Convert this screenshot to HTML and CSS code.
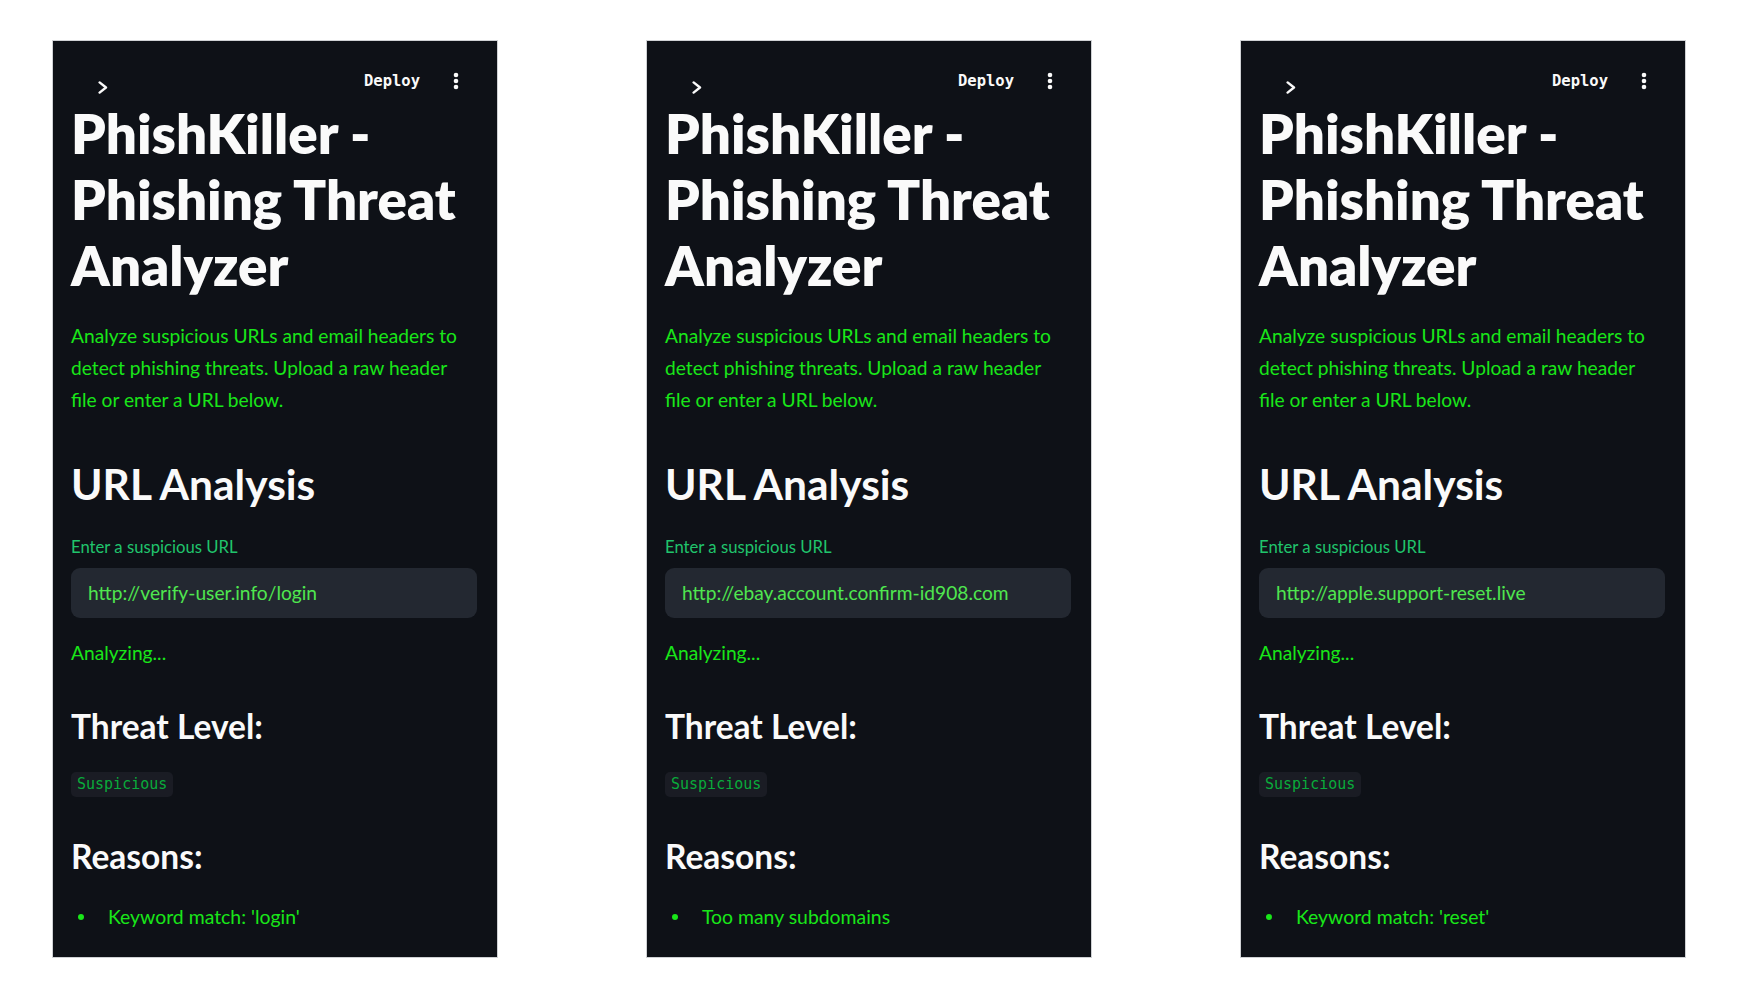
FILE: index.html
```html
<!DOCTYPE html>
<html lang="en">
<head>
<meta charset="utf-8">
<title>PhishKiller - Phishing Threat Analyzer</title>
<link rel="stylesheet" href="styles.css">
</head>
<body>
<main class="board">

  <section class="phone">
    <header class="topbar">
      <svg class="chevron" width="10" height="13" viewBox="0 0 10 13"><polyline points="1.6,1.4 8,6.5 1.6,11.6" fill="none" stroke="#fafafa" stroke-width="2.4" stroke-linecap="round" stroke-linejoin="round"/></svg>
      <span class="deploy">Deploy</span>
      <svg class="kebab" width="6" height="18" viewBox="0 0 6 18"><circle cx="3" cy="3" r="2.3" fill="#fafafa"/><circle cx="3" cy="9" r="2.3" fill="#fafafa"/><circle cx="3" cy="15" r="2.3" fill="#fafafa"/></svg>
    </header>
    <div class="content">
      <h1 class="title">PhishKiller - Phishing Threat Analyzer</h1>
      <p class="intro">Analyze suspicious URLs and email headers to detect phishing threats. Upload a raw header file or enter a URL below.</p>
      <h2 class="section-title">URL Analysis</h2>
      <label class="field-label">Enter a suspicious URL</label>
      <input class="url-input" type="text" value="http://verify-user.info/login" readonly>
      <p class="status">Analyzing...</p>
      <h3 class="sub-title">Threat Level:</h3>
      <code class="badge">Suspicious</code>
      <h3 class="sub-title reasons">Reasons:</h3>
      <ul class="reasons-list"><li>Keyword match: 'login'</li></ul>
    </div>
  </section>

  <section class="phone">
    <header class="topbar">
      <svg class="chevron" width="10" height="13" viewBox="0 0 10 13"><polyline points="1.6,1.4 8,6.5 1.6,11.6" fill="none" stroke="#fafafa" stroke-width="2.4" stroke-linecap="round" stroke-linejoin="round"/></svg>
      <span class="deploy">Deploy</span>
      <svg class="kebab" width="6" height="18" viewBox="0 0 6 18"><circle cx="3" cy="3" r="2.3" fill="#fafafa"/><circle cx="3" cy="9" r="2.3" fill="#fafafa"/><circle cx="3" cy="15" r="2.3" fill="#fafafa"/></svg>
    </header>
    <div class="content">
      <h1 class="title">PhishKiller - Phishing Threat Analyzer</h1>
      <p class="intro">Analyze suspicious URLs and email headers to detect phishing threats. Upload a raw header file or enter a URL below.</p>
      <h2 class="section-title">URL Analysis</h2>
      <label class="field-label">Enter a suspicious URL</label>
      <input class="url-input" type="text" value="http://ebay.account.confirm-id908.com" readonly>
      <p class="status">Analyzing...</p>
      <h3 class="sub-title">Threat Level:</h3>
      <code class="badge">Suspicious</code>
      <h3 class="sub-title reasons">Reasons:</h3>
      <ul class="reasons-list"><li>Too many subdomains</li></ul>
    </div>
  </section>

  <section class="phone">
    <header class="topbar">
      <svg class="chevron" width="10" height="13" viewBox="0 0 10 13"><polyline points="1.6,1.4 8,6.5 1.6,11.6" fill="none" stroke="#fafafa" stroke-width="2.4" stroke-linecap="round" stroke-linejoin="round"/></svg>
      <span class="deploy">Deploy</span>
      <svg class="kebab" width="6" height="18" viewBox="0 0 6 18"><circle cx="3" cy="3" r="2.3" fill="#fafafa"/><circle cx="3" cy="9" r="2.3" fill="#fafafa"/><circle cx="3" cy="15" r="2.3" fill="#fafafa"/></svg>
    </header>
    <div class="content">
      <h1 class="title">PhishKiller - Phishing Threat Analyzer</h1>
      <p class="intro">Analyze suspicious URLs and email headers to detect phishing threats. Upload a raw header file or enter a URL below.</p>
      <h2 class="section-title">URL Analysis</h2>
      <label class="field-label">Enter a suspicious URL</label>
      <input class="url-input" type="text" value="http://apple.support-reset.live" readonly>
      <p class="status">Analyzing...</p>
      <h3 class="sub-title">Threat Level:</h3>
      <code class="badge">Suspicious</code>
      <h3 class="sub-title reasons">Reasons:</h3>
      <ul class="reasons-list"><li>Keyword match: 'reset'</li></ul>
    </div>
  </section>

</main>
</body>
</html>
```

FILE: styles.css
```css
html, body {
  margin: 0;
  padding: 0;
  background: #ffffff;
}

.board {
  display: flex;
  align-items: flex-start;
  gap: 148px;
  padding: 40px 0 0 52px;
}

.phone {
  width: 446px;
  height: 918px;
  box-sizing: border-box;
  border: 1px solid #cfd1d4;
  background: #0e1117;
  overflow: hidden;
  font-family: Lato, "Liberation Sans", sans-serif;
}

.topbar {
  display: flex;
  align-items: flex-start;
  height: 59px;
  box-sizing: border-box;
  padding: 31px 38px 0 45px;
}

.chevron {
  display: block;
  margin-top: 9px;
}

.deploy {
  margin-left: auto;
  font-family: "DejaVu Sans Mono", "Liberation Mono", monospace;
  font-size: 15.5px;
  line-height: 18px;
  font-weight: 600;
  color: #fafafa;
}

.kebab {
  display: block;
  margin-left: 33px;
}

.content {
  padding: 0 20px 0 18px;
}

.title {
  margin: 0;
  font-size: 54.7px;
  line-height: 66px;
  font-weight: 800;
  color: #fafafa;
}

.intro {
  margin: 22px 0 0;
  font-size: 19.2px;
  line-height: 32px;
  color: #19e619;
}

.section-title {
  margin: 41px 0 0;
  font-size: 42.5px;
  line-height: 54px;
  font-weight: 700;
  color: #fafafa;
}

.field-label {
  display: block;
  margin-top: 25px;
  font-size: 16.7px;
  line-height: 22px;
  color: #20c46c;
}

.url-input {
  display: block;
  width: 100%;
  height: 50px;
  box-sizing: border-box;
  margin: 9.5px 0 0;
  padding: 0 17px;
  border: none;
  border-radius: 9px;
  outline: none;
  background: #232831;
  color: #4fe64f;
  font-family: Lato, "Liberation Sans", sans-serif;
  font-size: 19.2px;
}

.status {
  margin: 19.5px 0 0;
  font-size: 19.2px;
  line-height: 32px;
  color: #19e619;
}

.sub-title {
  margin: 36px 0 0;
  font-size: 33.5px;
  line-height: 42px;
  font-weight: 700;
  color: #fafafa;
}

.sub-title.reasons {
  margin-top: 38px;
}

.badge {
  display: block;
  width: max-content;
  margin-top: 25px;
  height: 25px;
  line-height: 25px;
  padding: 0 6px;
  border-radius: 5px;
  background: #1a1c24;
  color: #09ab3b;
  font-family: "DejaVu Sans Mono", "Liberation Mono", monospace;
  font-size: 15px;
}

.reasons-list {
  margin: 24px 0 0;
  padding: 0;
  list-style: none;
}

.reasons-list li {
  display: flex;
  align-items: center;
  font-size: 19.4px;
  line-height: 32px;
  color: #19e619;
}

.reasons-list li::before {
  content: "";
  flex: none;
  width: 6px;
  height: 6px;
  border-radius: 50%;
  background: currentColor;
  margin: 0 24px 0 7px;
}
```
